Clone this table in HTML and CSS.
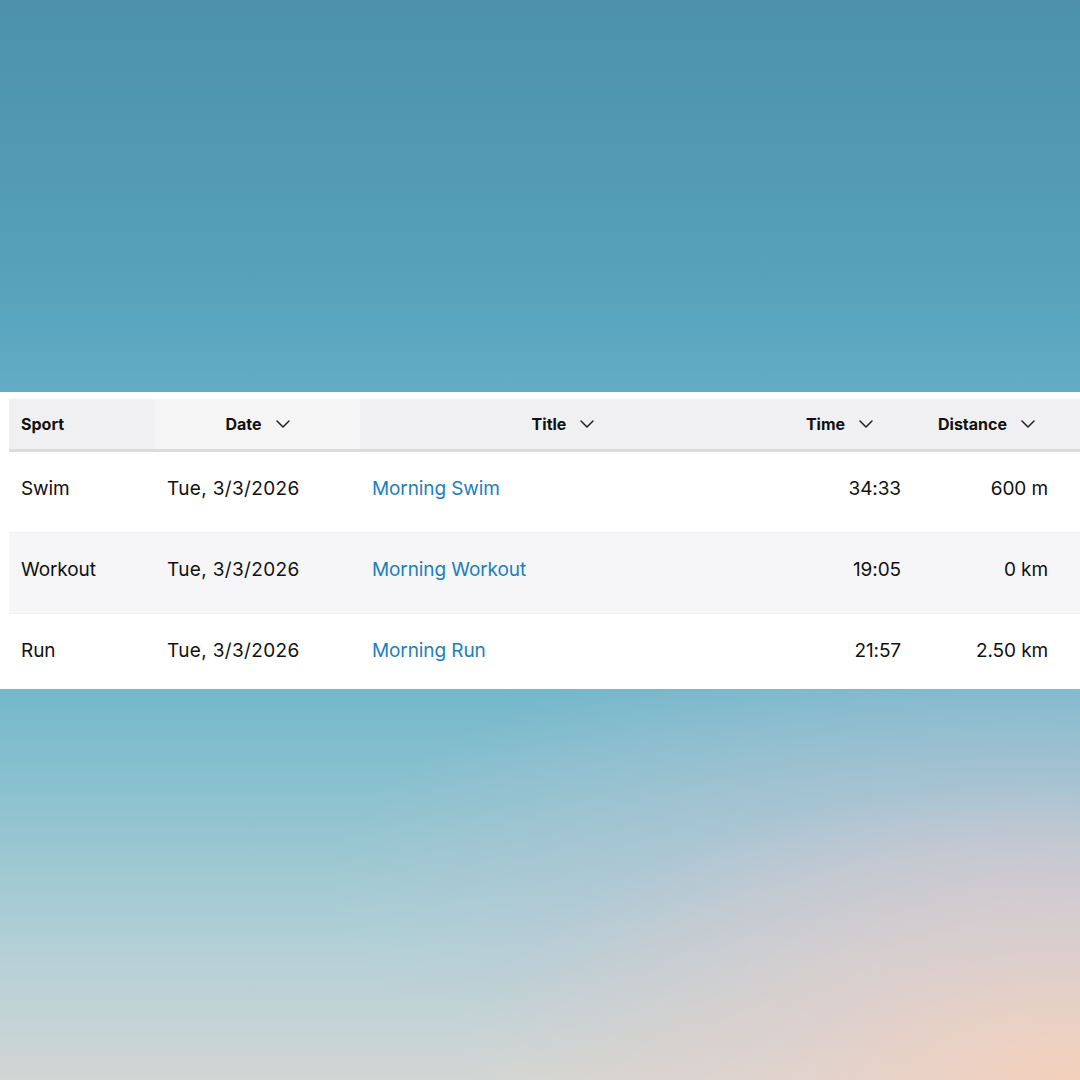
FILE: index.html
```html
<!DOCTYPE html>
<html lang="en">
<head>
<meta charset="utf-8">
<title>Activities</title>
<link rel="stylesheet" href="styles.css">
</head>
<body>
<div class="page">
  <div class="sky-top"></div>
  <section class="panel">
    <div class="table">
      <div class="row head">
        <div class="cell th left">Sport</div>
        <div class="cell th center light">Date <svg class="chev" viewBox="0 0 14 8"><path d="M1 1l6 6 6-6"/></svg></div>
        <div class="cell th center">Title <svg class="chev" viewBox="0 0 14 8"><path d="M1 1l6 6 6-6"/></svg></div>
        <div class="cell th center">Time <svg class="chev" viewBox="0 0 14 8"><path d="M1 1l6 6 6-6"/></svg></div>
        <div class="cell th center">Distance <svg class="chev" viewBox="0 0 14 8"><path d="M1 1l6 6 6-6"/></svg></div>
        <div class="cell th"></div>
      </div>
      <div class="row">
        <div class="cell">Swim</div>
        <div class="cell date">Tue, 3/3/2026</div>
        <div class="cell"><a class="link" href="#">Morning Swim</a></div>
        <div class="cell right">34:33</div>
        <div class="cell right">600 m</div>
        <div class="cell"></div>
      </div>
      <div class="row alt">
        <div class="cell">Workout</div>
        <div class="cell date">Tue, 3/3/2026</div>
        <div class="cell"><a class="link" href="#">Morning Workout</a></div>
        <div class="cell right">19:05</div>
        <div class="cell right">0 km</div>
        <div class="cell"></div>
      </div>
      <div class="row">
        <div class="cell">Run</div>
        <div class="cell date">Tue, 3/3/2026</div>
        <div class="cell"><a class="link" href="#">Morning Run</a></div>
        <div class="cell right">21:57</div>
        <div class="cell right">2.50 km</div>
        <div class="cell"></div>
      </div>
    </div>
  </section>
</div>
</body>
</html>
```

FILE: styles.css
```css
html, body {
  margin: 0;
  padding: 0;
}
body {
  width: 1080px;
  height: 1080px;
  overflow: hidden;
  font-family: Inter, "Noto Sans", "Liberation Sans", sans-serif;
  color: #111;
}
.page {
  width: 1080px;
  height: 1080px;
  display: flex;
  flex-direction: column;
  background:
    radial-gradient(ellipse 620px 300px at 100% 100%, rgba(246, 208, 186, 0.95) 0%, rgba(236, 210, 200, 0.6) 45%, rgba(210, 200, 215, 0) 100%),
    radial-gradient(ellipse 700px 260px at 95% 82%, rgba(200, 196, 214, 0.75) 0%, rgba(190, 196, 214, 0) 100%),
    linear-gradient(180deg, #4d91ac 0%, #539cb5 18%, #5aa5bf 30%, #62acc6 36%, #74b8cb 64%, #92c4d0 76%, #b3d0d6 88%, #d2d6d4 100%);
}
.sky-top {
  height: 392px;
  flex: none;
}
.panel {
  background: #fff;
  height: 297px;
  padding: 7px 0 0 9px;
  box-sizing: border-box;
  overflow: hidden;
  flex: none;
}
.table {
  width: 1200px;
}
.row {
  display: grid;
  grid-template-columns: 146px 205px 406px 147px 147px 1fr;
  height: 80px;
  border-bottom: 1px solid #f0f0f2;
  font-size: 19px;
  letter-spacing: -0.1px;
}
.row:not(.head) .cell {
  padding-bottom: 7px;
}
.row.alt {
  background: #f6f6f8;
}
.row.head {
  height: 50px;
  border-bottom: 3px solid #dcdcde;
  background: #f0f0f3;
  font-size: 16px;
  font-weight: 700;
  letter-spacing: 0;
}
.cell {
  display: flex;
  align-items: center;
  padding: 0 12px;
  white-space: nowrap;
}
.cell.date {
  letter-spacing: 0.35px;
}
.cell.right {
  justify-content: flex-end;
}
.th.center {
  justify-content: center;
  gap: 14px;
}
.th.light {
  background: #f5f5f6;
}
.chev {
  width: 14px;
  height: 8px;
  fill: none;
  stroke: #222;
  stroke-width: 1.5;
  stroke-linecap: round;
  stroke-linejoin: round;
}
.link {
  color: #1c7fbc;
  text-decoration: none;
}
```
